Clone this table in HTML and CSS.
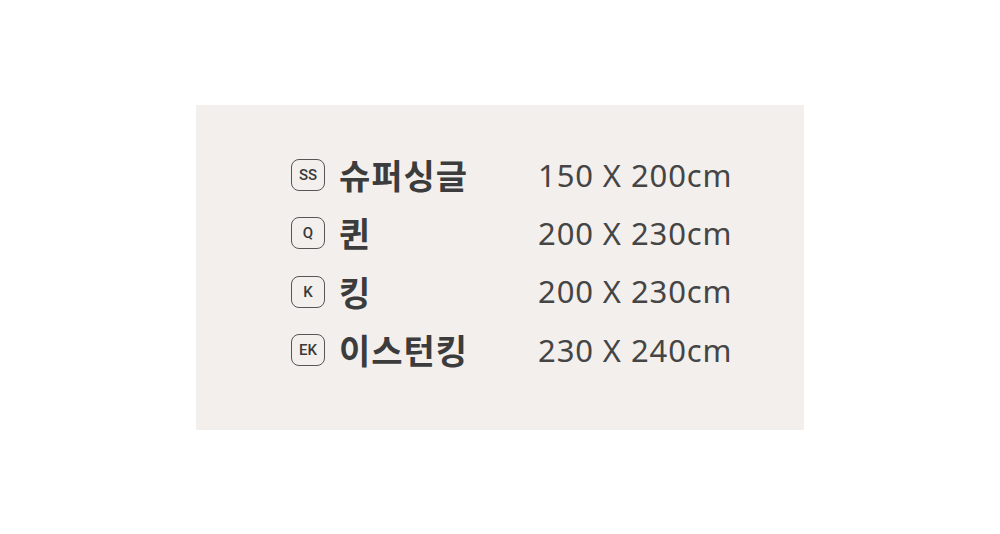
FILE: index.html
```html
<!DOCTYPE html>
<html lang="ko">
<head>
<meta charset="utf-8">
<link rel="stylesheet" href="styles.css">
</head>
<body>
<div class="panel">
  <div class="table">
    <div class="badge">SS</div><div class="name">슈퍼싱글</div><div class="size">150 X 200cm</div>
    <div class="badge">Q</div><div class="name">퀸</div><div class="size">200 X 230cm</div>
    <div class="badge">K</div><div class="name">킹</div><div class="size">200 X 230cm</div>
    <div class="badge">EK</div><div class="name">이스턴킹</div><div class="size">230 X 240cm</div>
  </div>
</div>
</body>
</html>
```
FILE: styles.css
```css
html, body {
  margin: 0;
  padding: 0;
  background: #ffffff;
}
body {
  width: 1000px;
  height: 534px;
  display: flex;
  justify-content: center;
  align-items: flex-start;
}
.panel {
  margin-top: 105px;
  width: 608px;
  height: 325px;
  box-sizing: border-box;
  background: #f3efec;
  padding: 41px 0 0 95px;
}
.table {
  display: grid;
  grid-template-columns: 34px 213px auto;
  grid-auto-rows: 58.3px;
  align-items: center;
}
.badge {
  width: 34px;
  height: 32px;
  box-sizing: border-box;
  border: 1.6px solid #555;
  border-radius: 8px;
  display: flex;
  align-items: center;
  justify-content: center;
  font-family: Roboto, "Noto Sans", sans-serif;
  font-size: 15px;
  font-weight: 500;
  color: #3a3a3a;
}
.name {
  padding-left: 14px;
  font-family: "Noto Sans CJK KR", sans-serif;
  font-size: 34px;
  font-weight: 700;
  color: #3c3c3c;
  line-height: 1;
  letter-spacing: 1px;
}
.size {
  font-family: "Noto Sans", sans-serif;
  font-size: 31px;
  font-weight: 400;
  color: #454545;
  line-height: 1;
  letter-spacing: 0.9px;
}
```
